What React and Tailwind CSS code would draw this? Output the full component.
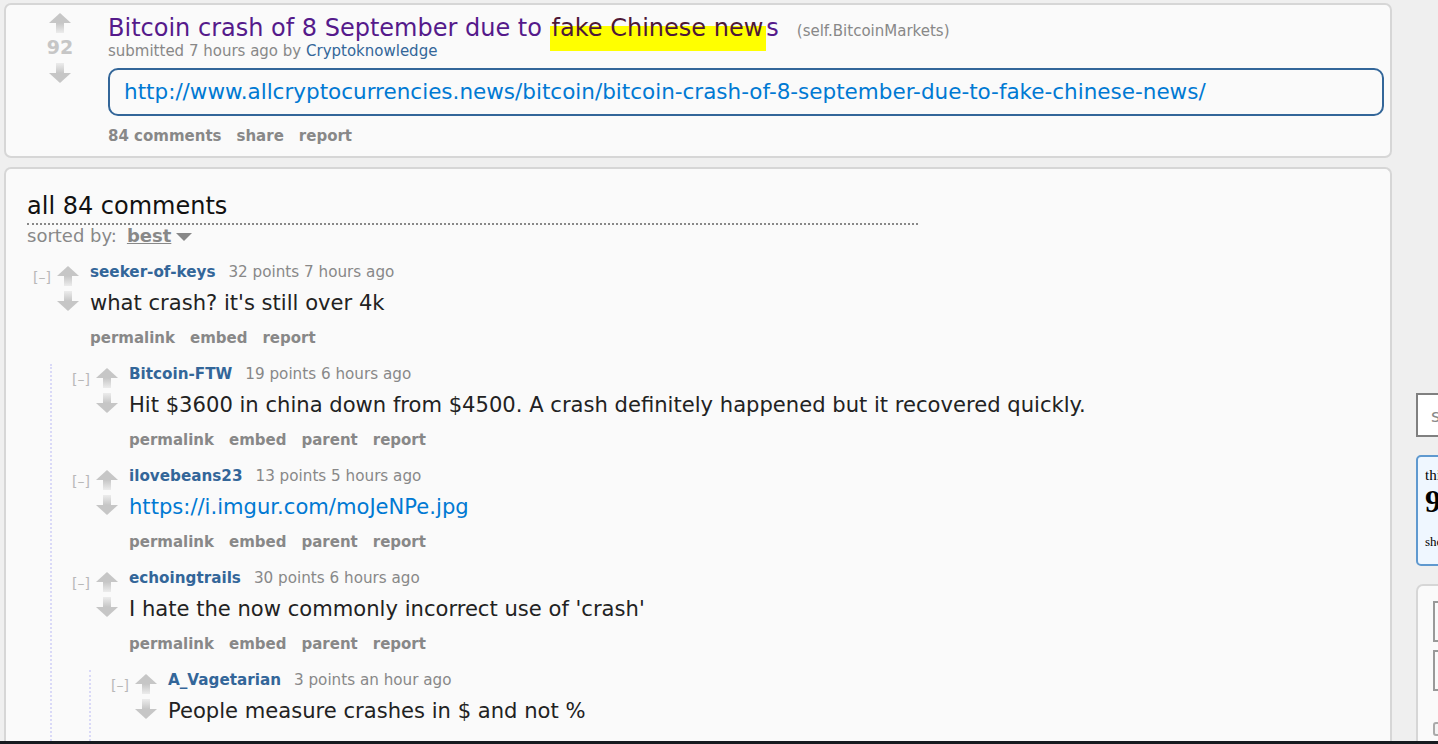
import React, { useId } from "react";

const FONT = { fontFamily: '"DejaVu Sans", Verdana, sans-serif' };

function Arrow({ dir = "up", className = "" }) {
  const id = useId().replace(/:/g, "");
  const up = dir === "up";
  return (
    <svg width="22" height="20" viewBox="0 0 22 20" className={className}>
      <defs>
        <linearGradient id={id} x1="0" y1="0" x2="0" y2="1">
          <stop offset="0" stopColor={up ? "#c6c6c6" : "#ececec"} />
          <stop offset="1" stopColor={up ? "#ececec" : "#c6c6c6"} />
        </linearGradient>
      </defs>
      {up ? (
        <>
          <polygon points="11,0 22,10 0,10" fill="#c6c6c6" />
          <rect x="7" y="10" width="8" height="10" fill={`url(#${id})`} />
        </>
      ) : (
        <>
          <rect x="7" y="0" width="8" height="10" fill={`url(#${id})`} />
          <polygon points="0,10 22,10 11,20" fill="#c6c6c6" />
        </>
      )}
    </svg>
  );
}

function Comment({ c }) {
  return (
    <div>
      <div className="flex">
        <div className="w-[24px] shrink-0 pt-[7px] text-[14px] leading-[16px] text-[#b8b8b8]">[–]</div>
        <div className="w-[22px] shrink-0 flex flex-col pt-[4px] gap-[5px]">
          <Arrow dir="up" />
          <Arrow dir="down" />
        </div>
        <div className="ml-[11px] pb-[17px]">
          <div className="text-[15.2px] leading-[20px] whitespace-nowrap">
            <span className="font-bold text-[#336699]">{c.user}</span>
            <span className="ml-[13px] text-[#888]">{c.meta}</span>
          </div>
          <div
            className={`mt-[8px] text-[21.1px] leading-[26px] whitespace-nowrap ${
              c.link ? "text-[#0079d3]" : "text-[#222]"
            }`}
          >
            {c.body}
          </div>
          {c.buttons && (
            <div className="mt-[13px] flex gap-[15px] text-[15px] leading-[18px] font-bold text-[#888]">
              {c.buttons.map((b) => (
                <span key={b}>{b}</span>
              ))}
            </div>
          )}
        </div>
      </div>
      {c.children && c.children.length > 0 && (
        <div className="ml-[17px] border-l-2 border-dotted border-[#d9d9f7] pl-[20px]">
          {c.children.map((ch) => (
            <Comment key={ch.user} c={ch} />
          ))}
        </div>
      )}
    </div>
  );
}

const child = ["permalink", "embed", "parent", "report"];

const comments = [
  {
    user: "seeker-of-keys",
    meta: "32 points 7 hours ago",
    body: "what crash? it's still over 4k",
    buttons: ["permalink", "embed", "report"],
    children: [
      {
        user: "Bitcoin-FTW",
        meta: "19 points 6 hours ago",
        body: "Hit $3600 in china down from $4500. A crash definitely happened but it recovered quickly.",
        buttons: child,
      },
      {
        user: "ilovebeans23",
        meta: "13 points 5 hours ago",
        body: "https://i.imgur.com/moJeNPe.jpg",
        link: true,
        buttons: child,
      },
      {
        user: "echoingtrails",
        meta: "30 points 6 hours ago",
        body: "I hate the now commonly incorrect use of 'crash'",
        buttons: child,
        children: [
          {
            user: "A_Vagetarian",
            meta: "3 points an hour ago",
            body: "People measure crashes in $ and not %",
          },
        ],
      },
    ],
  },
];

export default function App() {
  return (
    <div className="w-[1438px] h-[744px] overflow-hidden flex flex-col bg-[#efefef]" style={FONT}>
      <div className="flex-1 min-h-0 flex">
        {/* main column */}
        <div className="w-[1388px] shrink-0 ml-[4px] pt-[3px] flex flex-col gap-[9px]">
          {/* post panel */}
          <div className="h-[155px] shrink-0 border-2 border-[#d6d6d6] rounded-[7px] bg-[#fafafa] flex">
            <div className="ml-[34px] w-[40px] flex flex-col items-center pt-[8px]">
              <Arrow dir="up" />
              <div className="mt-[4px] text-[19px] leading-[20px] font-bold text-[#c6c6c6]">92</div>
              <Arrow dir="down" className="mt-[6px]" />
            </div>
            <div className="ml-[28px] flex-1 pt-[11px] pr-[6px]">
              <div className="text-[24px] leading-[24px] whitespace-nowrap">
                <span className="text-[#551a8b]">Bitcoin crash of 8 September due to </span>
                <span className="text-[#4e1838] pl-[2px] pr-[3px] pb-[9px] bg-[linear-gradient(#ffff00,#ffff00)] bg-no-repeat bg-[length:100%_25px] bg-bottom">
                  fake Chinese new
                </span>
                <span className="text-[#551a8b]">s</span>
                <span className="ml-[18px] text-[15px] text-[#888]">(self.BitcoinMarkets)</span>
              </div>
              <div className="mt-[-1px] text-[15px] leading-[18px] text-[#888]">
                submitted 7 hours ago by <span className="text-[#336699]">Cryptoknowledge</span>
              </div>
              <div className="mt-[8px] h-[48px] border-2 border-[#336699] rounded-[10px] flex items-center pl-[14px] text-[21.5px] text-[#0079d3] whitespace-nowrap">
                http://www.allcryptocurrencies.news/bitcoin/bitcoin-crash-of-8-september-due-to-fake-chinese-news/
              </div>
              <div className="mt-[11px] flex gap-[15px] text-[15px] leading-[18px] font-bold text-[#888]">
                <span>84 comments</span>
                <span>share</span>
                <span>report</span>
              </div>
            </div>
          </div>

          {/* comments panel */}
          <div className="flex-1 min-h-0 overflow-hidden border-2 border-b-0 border-[#d6d6d6] rounded-t-[7px] bg-[#fafafa] pt-[23px]">
            <div className="ml-[21px] w-[891px] border-b-2 border-dotted border-[#888] text-[24px] leading-[28px] text-[#111] pb-[3px]">
              all 84 comments
            </div>
            <div className="ml-[21px] text-[18px] leading-[22px] text-[#888] flex items-center">
              <span>sorted by:</span>
              <span className="ml-[10px] font-bold underline">best</span>
              <svg width="16" height="10" viewBox="0 0 16 10" className="ml-[5px] mt-[2px]">
                <polygon points="0,1 16,1 8,9" fill="#888" />
              </svg>
            </div>
            <div className="mt-[15px] ml-[27px]">
              {comments.map((c) => (
                <Comment key={c.user} c={c} />
              ))}
            </div>
          </div>
        </div>

        {/* sidebar */}
        <div className="ml-[24px] w-[320px] shrink-0 pt-[393px] flex flex-col">
          <div className="h-[44px] border-2 border-[#808080] bg-white flex items-center pl-[13px] text-[18px] text-[#888] whitespace-nowrap">
            search
          </div>
          <div
            className="mt-[18px] h-[111px] border-2 border-[#5f99cf] rounded-[5px] bg-[#eff7ff] pl-[7px] pt-[9px] text-black whitespace-nowrap"
            style={{ fontFamily: '"Liberation Serif", serif' }}
          >
            <div className="text-[15px] leading-[18px]">this post was submitted on 08 Sep 2017</div>
            <div className="text-[32px] leading-[34px] font-bold">92 points</div>
            <div className="mt-[16px] text-[13px] leading-[16px]">shortlink:</div>
          </div>
          <div className="mt-[18px] flex-1 border-2 border-b-0 border-[#d6d6d6] rounded-t-[7px] bg-[#fafafa] pl-[15px] pt-[15px]">
            <div className="w-[260px] h-[41px] border-2 border-[#999] bg-[#fafafa]"></div>
            <div className="mt-[8px] w-[260px] h-[41px] border-2 border-[#999] bg-[#fafafa]"></div>
            <div className="mt-[31px] w-[14px] h-[14px] border-2 border-[#aaa] rounded-[3px] bg-[#f4f4f4]"></div>
          </div>
        </div>
      </div>
      <div className="h-[3px] shrink-0 bg-[#161a1f]"></div>
    </div>
  );
}
